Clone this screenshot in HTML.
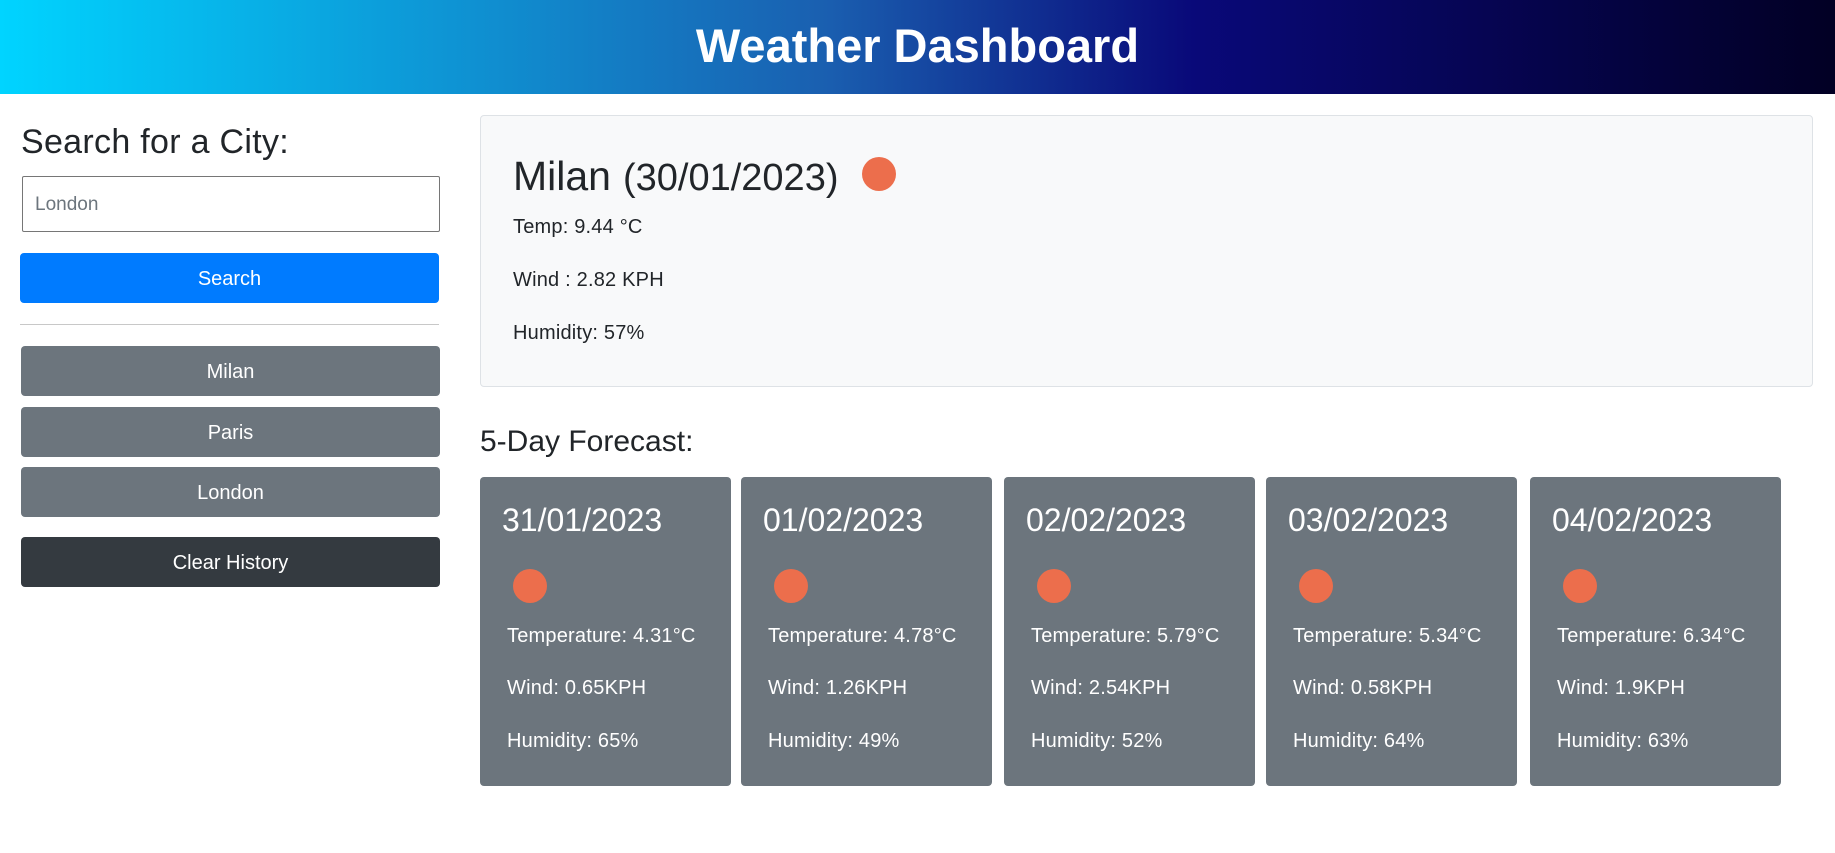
<!DOCTYPE html>
<html><head><meta charset="utf-8"><style>
*{box-sizing:border-box;margin:0;padding:0}
body{width:1835px;height:853px;background:#fff;font-family:"Liberation Sans",Helvetica,Arial,sans-serif;color:#212529;position:relative;overflow:hidden}
.hdr{position:absolute;left:0;top:0;width:1835px;height:94px;background:linear-gradient(90deg,#00d4ff 0%,#1a5fb0 45%,#090979 65%,#020024 100%);color:#fff;text-align:center;font-size:47px;font-weight:bold;line-height:92px}
.a{position:absolute}
.btn{position:absolute;left:21px;width:419px;border-radius:4px;color:#fff;font-size:20px;text-align:center}
.gray{background:#6c757d;height:50px;line-height:52px}
.dot{position:absolute;width:34px;height:34px;border-radius:50%;background:#ec6e4c}
.card{position:absolute;top:477px;width:251px;height:309px;background:#6c757d;border-radius:4px;color:#fff}
.card .d{position:absolute;left:22px;top:25px;font-size:32px}
.card .dot{left:33px;top:92px}
.card p{position:absolute;left:27px;font-size:20px;letter-spacing:0.2px}
</style></head><body>
<div class="hdr">Weather Dashboard</div>
<div class="a" style="left:21px;top:123px;font-size:34px;letter-spacing:0.3px">Search for a City:</div>
<div class="a" style="left:22px;top:176px;width:418px;height:56px;border:1px solid #767676;border-radius:2px;font-size:19px;color:#6c757d;line-height:56px;padding-left:12px">London</div>
<div class="btn" style="left:20px;top:253px;height:50px;line-height:52px;background:#007bff">Search</div>
<div class="a" style="left:20px;top:324px;width:419px;height:1px;background:#c8c8c8"></div>
<div class="btn gray" style="top:346px">Milan</div>
<div class="btn gray" style="top:407px">Paris</div>
<div class="btn gray" style="top:467px">London</div>
<div class="btn" style="top:537px;height:50px;line-height:52px;background:#343a40">Clear History</div>

<div class="a" style="left:480px;top:115px;width:1333px;height:272px;background:#f8f9fa;border:1px solid #dee2e6;border-radius:4px">
 <div class="a" style="left:32px;top:37px;white-space:nowrap"><span style="font-size:41px">Milan</span><span style="font-size:38px;margin-left:12px">(30/01/2023)</span></div>
 <div class="dot" style="left:381px;top:41px"></div>
 <div class="a" style="left:32px;top:100px;font-size:20px;letter-spacing:0.2px">Temp: 9.44 °C</div>
 <div class="a" style="left:32px;top:153px;font-size:20px;letter-spacing:0.2px">Wind : 2.82 KPH</div>
 <div class="a" style="left:32px;top:206px;font-size:20px;letter-spacing:0.2px">Humidity: 57%</div>
</div>
<div class="a" style="left:480px;top:425px;font-size:30px">5-Day Forecast:</div>

<div class="card" style="left:480px"><div class="d">31/01/2023</div><div class="dot"></div><p style="top:148px">Temperature: 4.31°C</p><p style="top:200px">Wind: 0.65KPH</p><p style="top:253px">Humidity: 65%</p></div>
<div class="card" style="left:741px"><div class="d">01/02/2023</div><div class="dot"></div><p style="top:148px">Temperature: 4.78°C</p><p style="top:200px">Wind: 1.26KPH</p><p style="top:253px">Humidity: 49%</p></div>
<div class="card" style="left:1004px"><div class="d">02/02/2023</div><div class="dot"></div><p style="top:148px">Temperature: 5.79°C</p><p style="top:200px">Wind: 2.54KPH</p><p style="top:253px">Humidity: 52%</p></div>
<div class="card" style="left:1266px"><div class="d">03/02/2023</div><div class="dot"></div><p style="top:148px">Temperature: 5.34°C</p><p style="top:200px">Wind: 0.58KPH</p><p style="top:253px">Humidity: 64%</p></div>
<div class="card" style="left:1530px"><div class="d">04/02/2023</div><div class="dot"></div><p style="top:148px">Temperature: 6.34°C</p><p style="top:200px">Wind: 1.9KPH</p><p style="top:253px">Humidity: 63%</p></div>
</body></html>
